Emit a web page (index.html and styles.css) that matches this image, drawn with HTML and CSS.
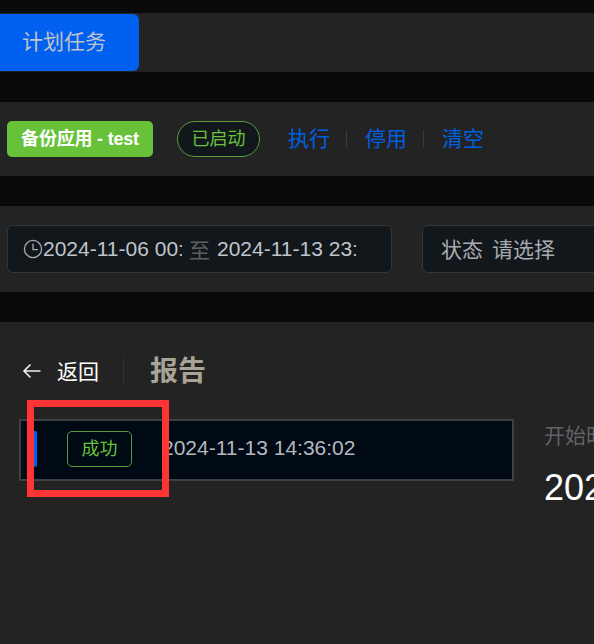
FILE: index.html
```html
<!DOCTYPE html>
<html lang="zh">
<head>
<meta charset="utf-8">
<title>计划任务</title>
<link rel="stylesheet" href="styles.css">
</head>
<body>
<div class="page">
  <section class="panel tabs">
    <div class="tab">计划任务</div>
  </section>
  <section class="panel header">
    <span class="app">备份应用 - test</span>
    <span class="status">已启动</span>
    <nav class="actions">
      <a class="action">执行</a>
      <i class="sep"></i>
      <a class="action">停用</a>
      <i class="sep"></i>
      <a class="action">清空</a>
    </nav>
  </section>
  <section class="panel filters">
    <div class="field range">
      <svg class="clock" width="20" height="20" viewBox="0 0 20 20" fill="none" stroke="#a8abb2" stroke-width="1.3"><circle cx="10" cy="10" r="8.6"/><path d="M10 4.8V10.6H15"/></svg>
      <span class="date">2024-11-06 00:</span>
      <span class="to">至</span>
      <span class="date">2024-11-13 23:</span>
    </div>
    <div class="field select">
      <span class="label">状态</span>
      <span class="placeholder">请选择</span>
    </div>
  </section>
  <section class="panel report">
    <div class="report-head">
      <svg class="back" width="20" height="16" viewBox="0 0 20 16" fill="none" stroke="#f2f2f2" stroke-width="1.6"><path d="M18.5 8H2M8.5 1.5L2 8l6.5 6.5"/></svg>
      <span class="back-text">返回</span>
      <i class="head-sep"></i>
      <h1 class="title">报告</h1>
    </div>
    <div class="report-body">
      <div class="record">
        <i class="marker"></i>
        <span class="badge">成功</span>
        <span class="time">2024-11-13 14:36:02</span>
      </div>
      <div class="detail">
        <div class="detail-label">开始时间</div>
        <div class="detail-value">2024-11-13 14:36:02</div>
      </div>
    </div>
  </section>
</div>
<div class="annotation"></div>
</body>
</html>
```
FILE: styles.css
```css
* { box-sizing: border-box; }
html, body { margin: 0; height: 100%; }
body {
  background: #0a0a0a;
  overflow: hidden;
  font-family: "Liberation Sans", "Noto Sans CJK SC", sans-serif;
  position: relative;
}
.page {
  width: 594px;
  height: 644px;
  overflow: hidden;
  padding-top: 13px;
  display: flex;
  flex-direction: column;
  gap: 30px;
}
.panel { background: #232323; width: 594px; flex: none; }
.tabs { height: 59px; padding-top: 1px; }
.tab {
  width: 139px;
  height: 57px;
  background: #0060f0;
  border-radius: 0 6px 6px 0;
  color: #c0c4cc;
  font-size: 21px;
  line-height: 55px;
  padding-left: 22px;
}
.header {
  height: 74px;
  display: flex;
  align-items: center;
  padding: 0 0 1px 7px;
}
.app {
  width: 146px;
  height: 36px;
  background: #67c23a;
  border-radius: 5px;
  color: #fff;
  font-size: 18px;
  font-weight: 700;
  line-height: 36px;
  text-align: center;
  letter-spacing: -0.2px;
  white-space: nowrap;
}
.status {
  margin-left: 24px;
  width: 83px;
  height: 36px;
  border: 1px solid #5a9c3a;
  border-radius: 18px;
  background: #12171b;
  color: #67c23a;
  font-size: 18px;
  line-height: 34px;
  text-align: center;
}
.actions { margin-left: 28px; display: flex; align-items: center; }
.action { color: #0060e0; font-size: 21px; line-height: 28px; }
.sep { width: 1px; height: 17px; background: #3a3d40; margin: 0 18px 0 16px; }
.filters {
  height: 86px;
  display: flex;
  padding: 19px 0 0 7px;
  gap: 30px;
}
.field {
  height: 48px;
  background: #12171b;
  border: 1px solid #33363b;
  border-radius: 6px;
  display: flex;
  align-items: center;
  font-size: 21px;
  color: #c0c4cc;
  white-space: nowrap;
}
.range { width: 385px; padding-left: 15px; flex: none; }
.clock { flex: none; }
.date { width: 139px; overflow: hidden; flex: none; }
.to { color: #5f5f5f; margin: 0 7px 0 7px; }
.select { width: 220px; padding: 0 0 3px 18px; flex: none; color: #a8abb2; }
.label { margin-right: 9px; }
.report { height: 322px; padding: 33px 0 0 19px; }
.report-head { display: flex; align-items: center; height: 32px; }
.back { margin-left: 3px; flex: none; }
.back-text { margin-left: 15px; color: #fff; font-size: 21px; padding-bottom: 3px; }
.head-sep { width: 1px; height: 26px; background: #333; margin: 0 26px 0 24px; }
.title { margin: 0; font-size: 28px; font-weight: 700; color: #a8a297; line-height: 32px; position: relative; top: 1px; }
.report-body { display: flex; margin-top: 32px; }
.record {
  width: 495px;
  height: 62px;
  flex: none;
  background: #000a14;
  border: 2px solid #3e4042;
  display: flex;
  align-items: center;
  position: relative;
}
.marker { width: 3px; height: 36px; background: #0060f0; margin-left: 13px; border-radius: 0 2px 2px 0; flex: none; margin-bottom: 2px; }
.badge {
  margin-left: 30px;
  width: 65px;
  height: 36px;
  border: 1px solid #5a9c3a;
  border-radius: 5px;
  color: #67c23a;
  font-size: 18px;
  line-height: 34px;
  text-align: center;
  flex: none;
  margin-bottom: 2px;
}
.time { margin-left: 30px; color: #b4b8bf; font-size: 21px; white-space: nowrap; position: relative; top: -2px; }
.detail { margin-left: 30px; white-space: nowrap; }
.detail-label { color: #5f6266; font-size: 21px; line-height: 30px; margin-top: 2px; }
.detail-value { color: #fff; font-size: 36px; line-height: 42px; margin-top: 16px; }
.annotation {
  position: absolute;
  left: 27px;
  top: 400px;
  width: 142px;
  height: 97px;
  border: 7px solid #ff3535;
}
```
